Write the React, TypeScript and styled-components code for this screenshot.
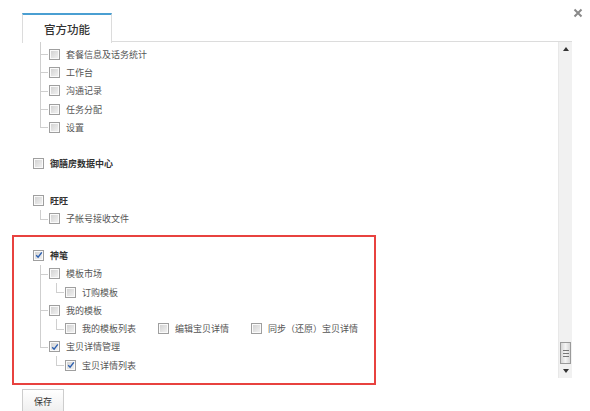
import React from 'react';
import styled, { createGlobalStyle } from 'styled-components';

const ROW = 18.3;

const Global = createGlobalStyle`
  html, body { margin: 0; padding: 0; background: #fff; }
  body { font-family: "Noto Sans CJK SC", "Noto Sans", sans-serif; }
  ul { list-style: none; margin: 0; padding: 0; }
`;

const Dialog = styled.div`
  position: relative;
  width: 590px;
  height: 411px;
  overflow: hidden;
  background: #fff;
`;

const Close = styled.button`
  position: absolute;
  top: 8px;
  right: 7px;
  width: 10px;
  height: 10px;
  padding: 0;
  border: 0;
  background: none;
  display: flex;
`;

const TabBar = styled.div`
  display: flex;
  align-items: flex-end;
  margin-left: 22px;
  width: 550px;
  padding-top: 12px;
`;

const Tab = styled.div`
  box-sizing: border-box;
  width: 90px;
  height: 30px;
  border-top: 2px solid #4a9fd2;
  border-left: 1px solid #dcdcdc;
  border-right: 1px solid #dcdcdc;
  background: #fff;
  display: flex;
  align-items: center;
  justify-content: center;
  font-size: 11.5px;
  font-weight: 500;
  color: #333;
  padding-bottom: 1px;
  margin-bottom: -1px;
`;

const TabFill = styled.div`
  flex: 1;
  height: 29px;
  border-bottom: 1px solid #dcdcdc;
`;

const Body = styled.div`
  display: flex;
  margin-left: 22px;
  width: 550px;
  height: 336px;
`;

const Content = styled.div`
  flex: 1;
  padding: 3px 0 0 11px;
  overflow: hidden;
`;

const Track = styled.div`
  width: 14px;
  background: #f1f1f1;
  border-left: 1px solid #e8e8e8;
  display: flex;
  flex-direction: column;
  box-sizing: border-box;
`;

const ArrowBtn = styled.div`
  height: 14px;
  display: flex;
  align-items: center;
  justify-content: center;
`;

const TrackSpace = styled.div`
  flex: 1;
`;

const Thumb = styled.div`
  box-sizing: border-box;
  height: 22px;
  margin: 0 1px;
  border: 1px solid #9a9a9a;
  background: linear-gradient(to right, #d6d6d6, #f4f4f4 50%, #d6d6d6);
  display: flex;
  flex-direction: column;
  align-items: center;
  justify-content: center;
  gap: 2px;
`;

const Grip = styled.span`
  width: 6px;
  height: 1px;
  background: #777;
`;

const Group = styled.li<{ $first?: boolean }>`
  margin-top: ${(p) => (p.$first ? 0 : ROW)}px;
`;

const Row = styled.div`
  height: ${ROW}px;
  display: flex;
  align-items: center;
  gap: 22px;
`;

const Option = styled.label<{ $bold?: boolean }>`
  display: flex;
  align-items: center;
  gap: 6px;
  font-size: 9px;
  line-height: 1;
  white-space: nowrap;
  color: ${(p) => (p.$bold ? '#333' : '#555')};
  font-weight: ${(p) => (p.$bold ? 700 : 400)};
`;

const Box = styled.span`
  position: relative;
  box-sizing: border-box;
  width: 11px;
  height: 11px;
  border: 1px solid #9f9f9f;
  background: linear-gradient(135deg, #cfcfcf, #f4f4f4);
  box-shadow: inset 0 0 0 1px #fafafa;
  display: flex;
  align-items: center;
  justify-content: center;
  flex: none;
`;

const ChildList = styled.ul`
  margin-left: 7px !important;
`;

const ChildItem = styled.li<{ $last?: boolean; $continued?: boolean }>`
  position: relative;
  padding-left: 9px;
  &::before {
    content: '';
    position: absolute;
    left: 0;
    top: ${(p) => (p.$continued ? -3 : 0)}px;
    ${(p) => (p.$last ? `height: ${ROW / 2 + (p.$continued ? 3 : 0)}px;` : 'bottom: 0;')}
    border-left: 1px solid #cfcfcf;
  }
  &::after {
    content: '';
    position: absolute;
    left: 0;
    top: ${ROW / 2}px;
    width: 8px;
    border-top: 1px solid #cfcfcf;
  }
`;

const Highlight = styled.div`
  position: absolute;
  left: 12px;
  top: 235px;
  width: 364px;
  height: 150px;
  box-sizing: border-box;
  border: 2px solid #e8423f;
  pointer-events: none;
`;

const Footer = styled.div`
  margin: 8px 0 0 22px;
`;

const SaveButton = styled.button`
  box-sizing: border-box;
  width: 42px;
  height: 26px;
  border: 1px solid #cdcdcd;
  background: linear-gradient(#ffffff, #ededed);
  font-family: "Noto Sans CJK SC", "Noto Sans", sans-serif;
  font-size: 9px;
  color: #333;
  padding: 0;
`;

type Item = { label: string; checked?: boolean };
type Node = {
  items: Item[];
  bold?: boolean;
  children?: Node[];
};

const Check = ({ checked }: { checked?: boolean }) => (
  <Box>
    {checked && (
      <svg width="8" height="8" viewBox="0 0 8 8">
        <path d="M1.2 4.2 L3.1 6.2 L6.8 1.4" fill="none" stroke="#2b5fb0" strokeWidth="1.4" />
      </svg>
    )}
  </Box>
);

const NodeRow = ({ node }: { node: Node }) => (
  <Row>
    {node.items.map((it) => (
      <Option key={it.label} $bold={node.bold}>
        <Check checked={it.checked} />
        {it.label}
      </Option>
    ))}
  </Row>
);

const Children = ({ nodes, continued }: { nodes: Node[]; continued?: boolean }) => (
  <ChildList>
    {nodes.map((n, i) => (
      <ChildItem key={i} $last={i === nodes.length - 1} $continued={continued && i === 0}>
        <NodeRow node={n} />
        {n.children && <Children nodes={n.children} />}
      </ChildItem>
    ))}
  </ChildList>
);

const scrolled: Node[] = [
  { items: [{ label: '套餐信息及话务统计' }] },
  { items: [{ label: '工作台' }] },
  { items: [{ label: '沟通记录' }] },
  { items: [{ label: '任务分配' }] },
  { items: [{ label: '设置' }] },
];

const groups: Node[] = [
  { items: [{ label: '御膳房数据中心' }], bold: true },
  { items: [{ label: '旺旺' }], bold: true, children: [{ items: [{ label: '子帐号接收文件' }] }] },
  {
    items: [{ label: '神笔', checked: true }],
    bold: true,
    children: [
      { items: [{ label: '模板市场' }], children: [{ items: [{ label: '订购模板' }] }] },
      {
        items: [{ label: '我的模板' }],
        children: [
          {
            items: [
              { label: '我的模板列表' },
              { label: '编辑宝贝详情' },
              { label: '同步（还原）宝贝详情' },
            ],
          },
        ],
      },
      {
        items: [{ label: '宝贝详情管理', checked: true }],
        children: [{ items: [{ label: '宝贝详情列表', checked: true }] }],
      },
    ],
  },
];

export default function App() {
  return (
    <>
      <Global />
      <Dialog>
        <Close aria-label="关闭">
          <svg width="10" height="10" viewBox="0 0 10 10">
            <path d="M1.5 1.5 L8.5 8.5 M8.5 1.5 L1.5 8.5" stroke="#8a8a8a" strokeWidth="2" />
          </svg>
        </Close>
        <TabBar>
          <Tab>官方功能</Tab>
          <TabFill />
        </TabBar>
        <Body>
          <Content>
            <ul>
              <Group $first>
                <Children nodes={scrolled} continued />
              </Group>
              {groups.map((g, i) => (
                <Group key={i}>
                  <NodeRow node={g} />
                  {g.children && <Children nodes={g.children} />}
                </Group>
              ))}
            </ul>
          </Content>
          <Track>
            <ArrowBtn>
              <svg width="6" height="4" viewBox="0 0 6 4">
                <path d="M0 4 L3 0 L6 4 Z" fill="#333" />
              </svg>
            </ArrowBtn>
            <TrackSpace />
            <Thumb>
              <Grip />
              <Grip />
              <Grip />
            </Thumb>
            <ArrowBtn>
              <svg width="6" height="4" viewBox="0 0 6 4">
                <path d="M0 0 L6 0 L3 4 Z" fill="#333" />
              </svg>
            </ArrowBtn>
          </Track>
        </Body>
        <Footer>
          <SaveButton>保存</SaveButton>
        </Footer>
        <Highlight />
      </Dialog>
    </>
  );
}
